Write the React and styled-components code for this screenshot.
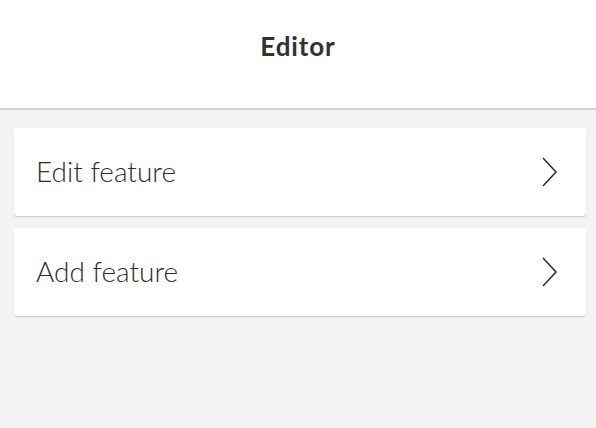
import styled, { createGlobalStyle } from "styled-components";

const Global = createGlobalStyle`
  html, body {
    margin: 0;
    padding: 0;
    background: #f3f3f3;
    font-family: Lato, "Noto Sans", sans-serif;
    color: #323232;
  }
`;

const Page = styled.div`
  min-height: 428px;
  background: #f3f3f3;
`;

const Header = styled.div`
  height: 110px;
  box-sizing: border-box;
  background: #ffffff;
  border-bottom: 2px solid #d4d4d4;
  display: flex;
  align-items: center;
  justify-content: center;
`;

const Title = styled.h1`
  margin: 0 0 16px;
  font-size: 26px;
  font-weight: 700;
  letter-spacing: 0.9px;
`;

const List = styled.div`
  display: flex;
  flex-direction: column;
  gap: 12px;
  padding: 18px 10px 0 14px;
`;

const Item = styled.div`
  height: 88px;
  background: #ffffff;
  border-radius: 3px;
  box-shadow: 0 1px 0 #cfcfcf, 0 1px 2px rgba(0, 0, 0, 0.08);
  display: flex;
  align-items: center;
  justify-content: space-between;
  padding: 0 28px 0 22px;
`;

const Label = styled.span`
  font-size: 28px;
  font-weight: 300;
  color: #2e2e2e;
  padding-bottom: 2px;
`;

const Chevron = () => (
  <svg width="17" height="32" viewBox="0 0 17 32" fill="none">
    <path d="M2 2 L15 16 L2 30" stroke="#323232" strokeWidth="1.6" />
  </svg>
);

export default function App() {
  return (
    <Page>
      <Global />
      <Header>
        <Title>Editor</Title>
      </Header>
      <List>
        <Item>
          <Label>Edit feature</Label>
          <Chevron />
        </Item>
        <Item>
          <Label>Add feature</Label>
          <Chevron />
        </Item>
      </List>
    </Page>
  );
}
